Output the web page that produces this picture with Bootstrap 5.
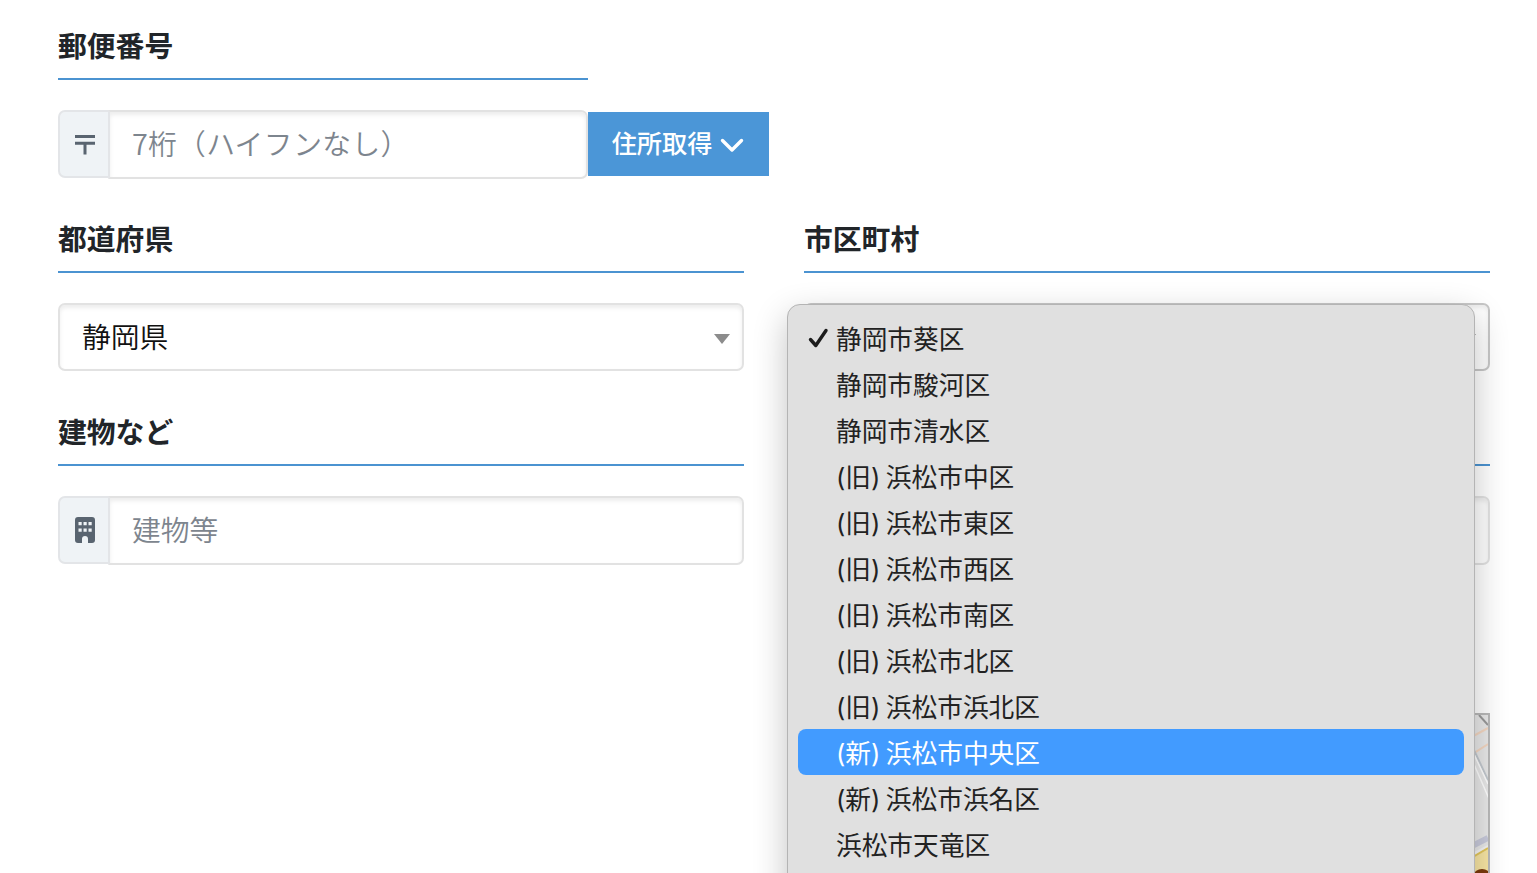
<!DOCTYPE html>
<html lang="ja">
<head>
<meta charset="utf-8">
<meta name="viewport" content="width=device-width, initial-scale=1">
<title>住所入力</title>
<link href="https://cdn.jsdelivr.net/npm/bootstrap@5.3.0/dist/css/bootstrap.min.css" rel="stylesheet">
<style>
  body { font-family: "Noto Sans CJK JP", sans-serif; color: #212529; background: #fff; }
  .page { height: 873px; overflow: hidden; }
  .address-form { width: 1432px; margin-left: 58px; padding-top: 24px; }
  .address-form .row { --bs-gutter-x: 60px; }
  .field { height: 193px; }
  .field-title { font-size: 28.8px; font-weight: 700; line-height: 42px; height: 56px; margin: 0 0 30px; border-bottom: 2px solid #4b93d1; }
  .zip-title { width: 530px; }
  .input-group { height: 69px; flex-wrap: nowrap; align-items: flex-start; }
  .input-group-text { width: 52px; height: 68px; padding: 0 0 0 2px; background: #eff3f6; border: 2px solid #e3e5e8; border-radius: 7px 0 0 7px; color: #596470; }
  .form-control, .pref-select { border: 2px solid #e2e2e2; border-radius: 7px; box-shadow: inset 0 3px 4px rgba(0,0,0,.075); font-size: 28.8px; line-height: 1; background-color: #fff; }
  .form-control { height: 69px; padding: 0 22px 4px; font-weight: 350; }
  .input-group > .form-control { margin-left: -2px !important; border-radius: 0 7px 7px 0 !important; border-left-color: #e3e5e8; }
  .form-control::placeholder { color: #7d858e; opacity: 1; }
  .zip-input { flex: 0 0 480px !important; letter-spacing: .25px; }
  .pref-select { height: 68px; padding: 0 12px 0 22px; color: #111; }
  .pref-select span { font-weight: 350; padding-bottom: 1px; }
  .city-select { border-color: #c7c7c7; }
  .zip-btn { width: 181px; height: 64px; margin: 2px 0 0 0 !important; padding: 0 1px 2px 0; border: 0; border-radius: 0 !important; background: #4b96d7; color: #fff; font-size: 25.2px; font-weight: 500; }
  .city-menu { display: block; position: absolute; top: 1px; left: -17px; width: 688px; height: 620px; padding: 10px 10px; background: #e0e0e0; border: 1px solid #b4b4b4; border-radius: 13px; box-shadow: 0 12px 34px rgba(0,0,0,.24); z-index: 10; }
  .city-menu .dropdown-item { height: 46px; padding: 0 0 0 38px; color: #222; font-family: Inter, "Noto Sans CJK JP", sans-serif; font-size: 25.7px; line-height: 49px; word-spacing: -1.800px; border-radius: 8px; position: relative; }
  .city-menu .dropdown-item.active { background: #429bff; color: #fff; }
  .tick { position: absolute; left: 9px; top: 12px; }
  .map-box { height: 190px; margin-top: 110px; border: 2px solid #b9b9b9; overflow: hidden; background: #e9e9e9; }
</style>
</head>
<body>
<div class="page">
<main class="address-form">
  <div class="field">
    <h2 class="field-title zip-title">郵便番号</h2>
    <div class="input-group">
      <span class="input-group-text justify-content-center">
        <svg width="22" height="22" viewBox="0 0 22 22" fill="none" stroke="currentColor" stroke-width="3"><path d="M1 3.500h20M1 10.300h20M11 10v11.500"/></svg>
      </span>
      <input class="form-control zip-input" type="text" placeholder="7桁（ハイフンなし）" aria-label="郵便番号">
      <button class="btn zip-btn d-flex align-items-center justify-content-center gap-2" type="button">住所取得
        <svg class="mt-1" width="24" height="15" viewBox="0 0 24 15" fill="none" stroke="#fff" stroke-width="3.400" stroke-linecap="round" stroke-linejoin="round"><path d="M2.500 2.500l9.500 9.500 9.500-9.500"/></svg>
      </button>
    </div>
  </div>
  <div class="row">
    <div class="col-6">
      <div class="field">
        <h2 class="field-title">都道府県</h2>
        <div class="pref-select d-flex align-items-center justify-content-between">
          <span>静岡県</span>
          <svg class="mt-1" width="16" height="10" viewBox="0 0 16 10"><path d="M0 0h16L8 10z" fill="#8c8c8c"/></svg>
        </div>
      </div>
      <div class="field">
        <h2 class="field-title">建物など</h2>
        <div class="input-group">
          <span class="input-group-text justify-content-center">
            <svg width="20" height="26" viewBox="0 0 20 26" fill="currentColor"><path fill-rule="evenodd" d="M3 0h14a3 3 0 0 1 3 3v20a3 3 0 0 1-3 3h-4v-4a3 3 0 0 0-6 0v4H3a3 3 0 0 1-3-3V3a3 3 0 0 1 3-3zM3.500 5v3.200h3.200V5zM8.500 5v3.200h3.200V5zM13.500 5v3.200h3.200V5zM3.500 11.500v3.200h3.200v-3.200zM8.500 11.500v3.200h3.200v-3.200zM13.500 11.500v3.200h3.200v-3.200z"/></svg>
          </span>
          <input class="form-control" type="text" placeholder="建物等" aria-label="建物など">
        </div>
      </div>
    </div>
    <div class="col-6">
      <div class="field">
        <h2 class="field-title">市区町村</h2>
        <div class="position-relative">
          <div class="pref-select city-select d-flex align-items-center justify-content-end">
            <svg class="mt-1" width="16" height="10" viewBox="0 0 16 10"><path d="M0 0h16L8 10z" fill="#8c8c8c"/></svg>
          </div>
          <div class="dropdown-menu city-menu">
            <a class="dropdown-item"><svg class="tick" width="22" height="22" viewBox="0 0 22 22" fill="none" stroke="#1c1c1c" stroke-width="3.400" stroke-linecap="round" stroke-linejoin="round"><path d="M3.500 12.500l5.300 6L19 3.500"/></svg>静岡市葵区</a>
            <a class="dropdown-item">静岡市駿河区</a>
            <a class="dropdown-item">静岡市清水区</a>
            <a class="dropdown-item">(旧) 浜松市中区</a>
            <a class="dropdown-item">(旧) 浜松市東区</a>
            <a class="dropdown-item">(旧) 浜松市西区</a>
            <a class="dropdown-item">(旧) 浜松市南区</a>
            <a class="dropdown-item">(旧) 浜松市北区</a>
            <a class="dropdown-item">(旧) 浜松市浜北区</a>
            <a class="dropdown-item active">(新) 浜松市中央区</a>
            <a class="dropdown-item">(新) 浜松市浜名区</a>
            <a class="dropdown-item">浜松市天竜区</a>
          </div>
        </div>
      </div>
      <div class="field">
        <h2 class="field-title"></h2>
        <input class="form-control" type="text" aria-label="町名・番地">
      </div>
      <div class="map-box d-flex justify-content-end">
        <svg width="20" height="190" viewBox="0 0 20 190" fill="none">
          <path d="M11 0l9 10" stroke="#999" stroke-width="2"/>
          <path d="M0 24l20-11M0 42l20-13" stroke="#f4d7c2" stroke-width="2"/>
          <path d="M4 31l16 34" stroke="#c3c9cf" stroke-width="2"/>
          <path d="M4 35l16 34M2 40l20 46" stroke="#fff" stroke-width="1.500"/>
          <path d="M0 133l20-10" stroke="#c9cbdc" stroke-width="6"/>
          <path d="M0 140l20-10v60H0z" fill="#f5f5f5"/>
          <path d="M0 146l20-12v56H0z" fill="#f9e6a4"/>
          <path d="M0 145l20-12" stroke="#e4c75a" stroke-width="2"/>
          <ellipse cx="14" cy="160" rx="8" ry="6" fill="#7c3a0c"/>
        </svg>
      </div>
    </div>
  </div>
</main>
</div>
<script src="https://cdn.jsdelivr.net/npm/bootstrap@5.3.0/dist/js/bootstrap.bundle.min.js"></script>
</body>
</html>
